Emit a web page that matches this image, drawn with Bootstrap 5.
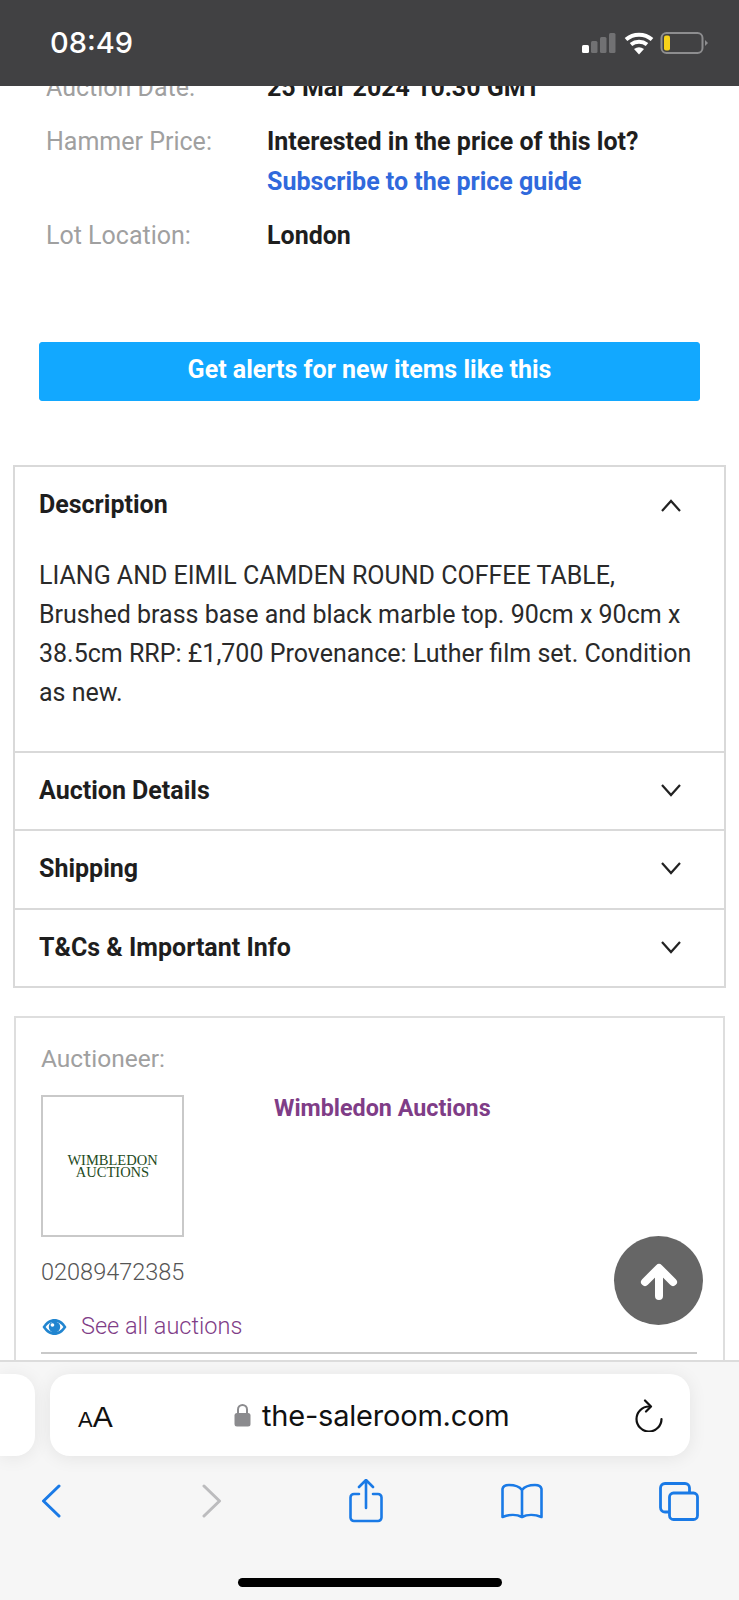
<!DOCTYPE html>
<html lang="en">
<head>
  <meta charset="UTF-8" />
  <meta name="viewport" content="width=device-width, initial-scale=1" />
  <title>Wimbledon Auctions lot</title>
  <link href="https://cdn.jsdelivr.net/npm/bootstrap@5.3.0/dist/css/bootstrap.min.css" rel="stylesheet" />
  <style>
    body {
      font-family: Roboto, "Liberation Sans", sans-serif;
      background-color: #fff;
      color: #1e1e1e;
      font-size: 25px;
      line-height: 39px;
    }

    .phone {
      height: 1600px;
      overflow: hidden;
    }

    .status-bar {
      height: 86px;
      flex: none;
      background-color: #414143;
      color: #fff;
      padding: 0 29px 0 50px;
      position: relative;
      z-index: 2;
    }

    .status-time {
      font-family: Inter, Roboto, sans-serif;
      font-size: 29px;
      font-weight: 500;
      line-height: 1;
      margin-top: -1px;
    }

    .page-area {
      flex: 1 1 0;
      min-height: 0;
      overflow: hidden;
      position: relative;
    }

    .lot-facts {
      margin-top: -18px;
      padding-left: 46px;
    }

    .fact-row {
      margin-bottom: 15px;
    }

    .fact-row + .fact-row {
      margin-bottom: 14px;
    }

    .fact-row + .fact-row + .fact-row {
      margin-top: 15px;
    }

    .fact-label {
      width: 221px;
      flex: none;
      color: #a0a0a0;
      font-weight: 400;
    }

    .fact-value {
      font-weight: 700;
    }

    .fact-value a {
      color: #3069dc;
      text-decoration: none;
      display: block;
      margin-top: 1px;
    }

    .btn-alerts {
      --bs-btn-bg: #12a8ff;
      --bs-btn-border-color: #12a8ff;
      --bs-btn-color: #fff;
      --bs-btn-hover-bg: #0f98e8;
      --bs-btn-hover-border-color: #0f98e8;
      --bs-btn-hover-color: #fff;
      display: block;
      width: 661px;
      height: 59px;
      margin: 87px 0 64px 39px;
      font-size: 25px;
      font-weight: 700;
      line-height: 54px;
      padding: 0;
      border-radius: 3px;
    }

    .lot-accordion {
      --bs-accordion-border-color: #d9d9d9;
      --bs-accordion-border-width: 2px;
      --bs-accordion-border-radius: 0;
      --bs-accordion-inner-border-radius: 0;
      --bs-accordion-btn-padding-x: 24px;
      --bs-accordion-btn-padding-y: 0;
      --bs-accordion-btn-color: #1e1e1e;
      --bs-accordion-active-color: #1e1e1e;
      --bs-accordion-active-bg: #fff;
      --bs-accordion-btn-focus-box-shadow: none;
      --bs-accordion-btn-icon-width: 20px;
      --bs-accordion-btn-icon: url("data:image/svg+xml,%3csvg xmlns='http://www.w3.org/2000/svg' viewBox='0 0 20 20'%3e%3cpath fill='none' stroke='%23222' stroke-width='2.2' d='M1 4l9 10 9-10'/%3e%3c/svg%3e");
      --bs-accordion-btn-active-icon: var(--bs-accordion-btn-icon);
      --bs-accordion-body-padding-x: 24px;
      --bs-accordion-body-padding-y: 0;
      margin: 0 13px;
    }

    .lot-accordion .accordion-button {
      height: 76.5px;
      font-size: 25px;
      font-weight: 700;
      box-shadow: none;
      padding-right: 43px;
    }

    .lot-accordion .accordion-body {
      font-size: 25px;
      line-height: 39.3px;
      padding-top: 12px;
      padding-bottom: 38px;
      color: #2a2a2a;
    }

    .auctioneer-box {
      border: 2px solid #dedede;
      margin: 28px 14px 0 14px;
      padding: 21px 26px 0 25px;
      height: 400px;
    }

    .box-label {
      color: #a0a0a0;
      font-weight: 400;
      font-size: 24.5px;
      margin-bottom: 17px;
    }

    .auctioneer-logo {
      width: 143px;
      height: 142px;
      flex: none;
      border: 2px solid #c9c9c9;
      font-family: "Liberation Serif", serif;
      color: #1e4a22;
      font-size: 14.5px;
      line-height: 12px;
      text-align: center;
    }

    .auctioneer-name {
      color: #7f3d87;
      font-weight: 700;
      font-size: 23.3px;
      text-decoration: none;
      margin: 1px 0 0 90px;
      line-height: 24px;
      height: 24px;
    }

    .auctioneer-phone {
      color: #555;
      font-weight: 300;
      font-size: 23.5px;
      margin: 16px 0 15px;
    }

    .see-all {
      color: #7f3d87;
      font-weight: 300;
      font-size: 23.5px;
      text-decoration: none;
    }

    .eye-icon {
      margin: 0 14px 0 1px;
    }

    .box-rule {
      height: 2px;
      background-color: #c9c9c9;
      margin: 6px 0 0 0;
    }

    .back-top {
      position: absolute;
      left: 614px;
      top: 1150px;
      width: 89px;
      height: 89px;
      padding: 0;
      border: 0;
      border-radius: 50%;
      background-color: #666;
    }

    .browser-bar {
      height: 240px;
      flex: none;
      background-color: #f6f6f6;
      border-top: 2px solid #dcdcdc;
      position: relative;
    }

    .url-row {
      margin-top: 12px;
    }

    .tab-peek {
      width: 35px;
      height: 82px;
      flex: none;
      background-color: #fff;
      border-radius: 0 20px 20px 0;
      box-shadow: 0 2px 18px rgba(0, 0, 0, 0.07);
    }

    .url-pill {
      width: 640px;
      height: 82px;
      flex: none;
      margin-left: 15px;
      background-color: #fff;
      border-radius: 20px;
      box-shadow: 0 2px 18px rgba(0, 0, 0, 0.08);
      padding: 0 27px 0 28px;
      color: #111;
    }

    .font-size-btn {
      font-family: "Liberation Sans", sans-serif;
      font-size: 30px;
      line-height: 1;
      width: 156px;
      flex: none;
      margin-top: 3px;
    }

    .font-size-btn span {
      font-size: 22px;
    }

    .lock-icon {
      margin-right: 11px;
    }

    .url-text {
      font-family: Inter, "Liberation Sans", sans-serif;
      font-size: 29px;
      line-height: 1;
      letter-spacing: -0.2px;
    }

    .toolbar-row {
      display: grid;
      grid-template-columns: 161px 147px 152px 158px auto;
      align-items: center;
      padding-left: 41px;
      margin-top: 23px;
      height: 44px;
    }

    .home-bar {
      width: 264px;
      height: 9px;
      background-color: #000;
      border-radius: 5px;
      margin: 55px auto 0;
    }
  </style>
</head>
<body>
  <div class="phone d-flex flex-column">
    <div class="status-bar d-flex align-items-center justify-content-between">
      <div class="status-time">08:49</div>
      <div class="d-flex align-items-center">
        <svg width="128" height="24" viewBox="0 0 128 24">
          <rect x="0" y="14" width="7" height="8" rx="1.500" fill="#fff" />
          <rect x="9" y="10" width="6.500" height="12" rx="1.500" fill="#717173" />
          <rect x="18" y="6" width="6.500" height="16" rx="1.500" fill="#717173" />
          <rect x="27" y="2" width="6.500" height="20" rx="1.500" fill="#717173" />
          <path d="M44 8.500a20 20 0 0 1 26 0M49 13.500a13 13 0 0 1 16 0" fill="none" stroke="#fff" stroke-width="4" />
          <path d="M52 18a9 9 0 0 1 10 0l-5 5.500z" fill="#fff" />
          <rect x="79.500" y="2" width="41" height="20" rx="5" fill="none" stroke="#8d8d8f" stroke-width="2" />
          <rect x="82" y="4.500" width="6" height="15" rx="2" fill="#f7d21a" />
          <path d="M123 9l3 3-3 3z" fill="#8d8d8f" />
        </svg>
      </div>
    </div>

    <div class="page-area">
      <div class="lot-facts">
        <div class="fact-row d-flex">
          <div class="fact-label">Auction Date:</div>
          <div class="fact-value">25 Mar 2024 10:30 GMT</div>
        </div>
        <div class="fact-row d-flex">
          <div class="fact-label">Hammer Price:</div>
          <div class="fact-value">Interested in the price of this lot?<a href="#">Subscribe to the price guide</a></div>
        </div>
        <div class="fact-row d-flex mb-0">
          <div class="fact-label">Lot Location:</div>
          <div class="fact-value">London</div>
        </div>
      </div>

      <a href="#" class="btn btn-alerts">Get alerts for new items like this</a>

      <div class="accordion lot-accordion" id="lotInfo">
        <div class="accordion-item">
          <h2 class="accordion-header">
            <button class="accordion-button" type="button" data-bs-toggle="collapse" data-bs-target="#infoDesc">Description</button>
          </h2>
          <div id="infoDesc" class="accordion-collapse collapse show" data-bs-parent="#lotInfo">
            <div class="accordion-body">LIANG AND EIMIL CAMDEN ROUND COFFEE TABLE, Brushed brass base and black marble top. 90cm x 90cm x 38.5cm RRP: £1,700 Provenance: Luther film set. Condition as new.</div>
          </div>
        </div>
        <div class="accordion-item">
          <h2 class="accordion-header">
            <button class="accordion-button collapsed" type="button" data-bs-toggle="collapse" data-bs-target="#infoAuction">Auction Details</button>
          </h2>
          <div id="infoAuction" class="accordion-collapse collapse" data-bs-parent="#lotInfo">
            <div class="accordion-body">Wimbledon Auctions, 25 Mar 2024</div>
          </div>
        </div>
        <div class="accordion-item">
          <h2 class="accordion-header">
            <button class="accordion-button collapsed" type="button" data-bs-toggle="collapse" data-bs-target="#infoShipping">Shipping</button>
          </h2>
          <div id="infoShipping" class="accordion-collapse collapse" data-bs-parent="#lotInfo">
            <div class="accordion-body">Contact the auctioneer.</div>
          </div>
        </div>
        <div class="accordion-item">
          <h2 class="accordion-header">
            <button class="accordion-button collapsed" type="button" data-bs-toggle="collapse" data-bs-target="#infoTerms">T&amp;Cs &amp; Important Info</button>
          </h2>
          <div id="infoTerms" class="accordion-collapse collapse" data-bs-parent="#lotInfo">
            <div class="accordion-body">See the auctioneer's terms.</div>
          </div>
        </div>
      </div>

      <div class="auctioneer-box">
        <div class="box-label">Auctioneer:</div>
        <div class="d-flex align-items-start">
          <div class="auctioneer-logo d-flex align-items-center justify-content-center">WIMBLEDON<br />AUCTIONS</div>
          <a href="#" class="auctioneer-name">Wimbledon Auctions</a>
        </div>
        <div class="auctioneer-phone">02089472385</div>
        <div class="d-flex align-items-center">
          <svg class="eye-icon" width="25" height="18" viewBox="0 0 24 18" preserveAspectRatio="none">
            <path d="M0.500 9C4 3 8 1 12 1s8 2 11.500 8C20 15 16 17 12 17S4 15 0.500 9z" fill="#2185d0" />
            <path d="M3.500 9C6 5.500 8 4 12 4s6 1.500 8.500 5C18 12.500 16 14 12 14s-6-1.500-8.500-5z" fill="#fff" />
            <circle cx="12" cy="9" r="5.500" fill="#2185d0" />
            <circle cx="10" cy="7" r="1.800" fill="#fff" />
          </svg>
          <a href="#" class="see-all">See all auctions</a>
        </div>
        <div class="box-rule"></div>
      </div>

      <button class="back-top d-flex align-items-center justify-content-center" type="button" aria-label="Back to top">
        <svg width="40" height="40" viewBox="0 0 40 40">
          <path d="M20 35V8M6 21L20 7l14 14" fill="none" stroke="#fff" stroke-width="8" stroke-linecap="round" stroke-linejoin="round" />
        </svg>
      </button>
    </div>

    <div class="browser-bar">
      <div class="url-row d-flex align-items-center">
        <div class="tab-peek"></div>
        <div class="url-pill d-flex align-items-center">
          <div class="font-size-btn"><span>A</span>A</div>
          <svg class="lock-icon" width="17" height="24" viewBox="0 0 17 24">
            <path d="M4 11V6.500a4.500 4.500 0 0 1 9 0V11" fill="none" stroke="#8b8b8e" stroke-width="2" />
            <rect x="0.500" y="10" width="16" height="13.500" rx="2.500" fill="#8b8b8e" />
          </svg>
          <div class="url-text">the-saleroom.com</div>
          <svg class="ms-auto" width="28" height="33" viewBox="0 0 28 33">
            <path d="M14 7.500A12.500 12.500 0 1 0 26.500 20" fill="none" stroke="#111" stroke-width="2.200" stroke-linecap="round" />
            <path d="M10 1.500l6 6-5 5" fill="none" stroke="#111" stroke-width="2.200" stroke-linecap="round" stroke-linejoin="round" />
          </svg>
        </div>
      </div>
      <div class="toolbar-row">
        <svg width="20" height="34" viewBox="0 0 20 34"><path d="M18 2L2.500 17 18 32" fill="none" stroke="#1a7ae6" stroke-width="3" stroke-linecap="round" stroke-linejoin="round" /></svg>
        <svg width="20" height="34" viewBox="0 0 20 34"><path d="M2 2l15.500 15L2 32" fill="none" stroke="#bcbcbe" stroke-width="3" stroke-linecap="round" stroke-linejoin="round" /></svg>
        <svg width="34" height="44" viewBox="0 0 34 44">
          <path d="M10 15H5a3.500 3.500 0 0 0-3.500 3.500v20A3.500 3.500 0 0 0 5 42h24a3.500 3.500 0 0 0 3.500-3.500v-20A3.500 3.500 0 0 0 29 15h-5M17 29V2M10 8l7-7 7 7" fill="none" stroke="#1a7ae6" stroke-width="2.600" stroke-linecap="round" stroke-linejoin="round" />
        </svg>
        <svg width="42" height="36" viewBox="0 0 42 36">
          <path d="M21 7C18 3 13 2 8 2 5 2 2 3 1.500 6v28c6-2.500 14-3 19.500 0 5.500-3 13.500-2.500 19.500 0V6C40 3 37 2 34 2c-5 0-10 1-13 5zM21 7v27" fill="none" stroke="#1a7ae6" stroke-width="2.600" stroke-linejoin="round" />
        </svg>
        <svg width="40" height="39" viewBox="0 0 40 39">
          <rect x="10.500" y="11" width="28" height="26.500" rx="4" fill="none" stroke="#1a7ae6" stroke-width="2.800" />
          <path d="M10 30H6a4.500 4.500 0 0 1-4.500-4.500V6A4.500 4.500 0 0 1 6 1.500h20A4.500 4.500 0 0 1 30.500 6v5" fill="none" stroke="#1a7ae6" stroke-width="2.800" />
        </svg>
      </div>
      <div class="home-bar"></div>
    </div>
  </div>

  <script src="https://cdn.jsdelivr.net/npm/bootstrap@5.3.0/dist/js/bootstrap.bundle.min.js"></script>
</body>
</html>
